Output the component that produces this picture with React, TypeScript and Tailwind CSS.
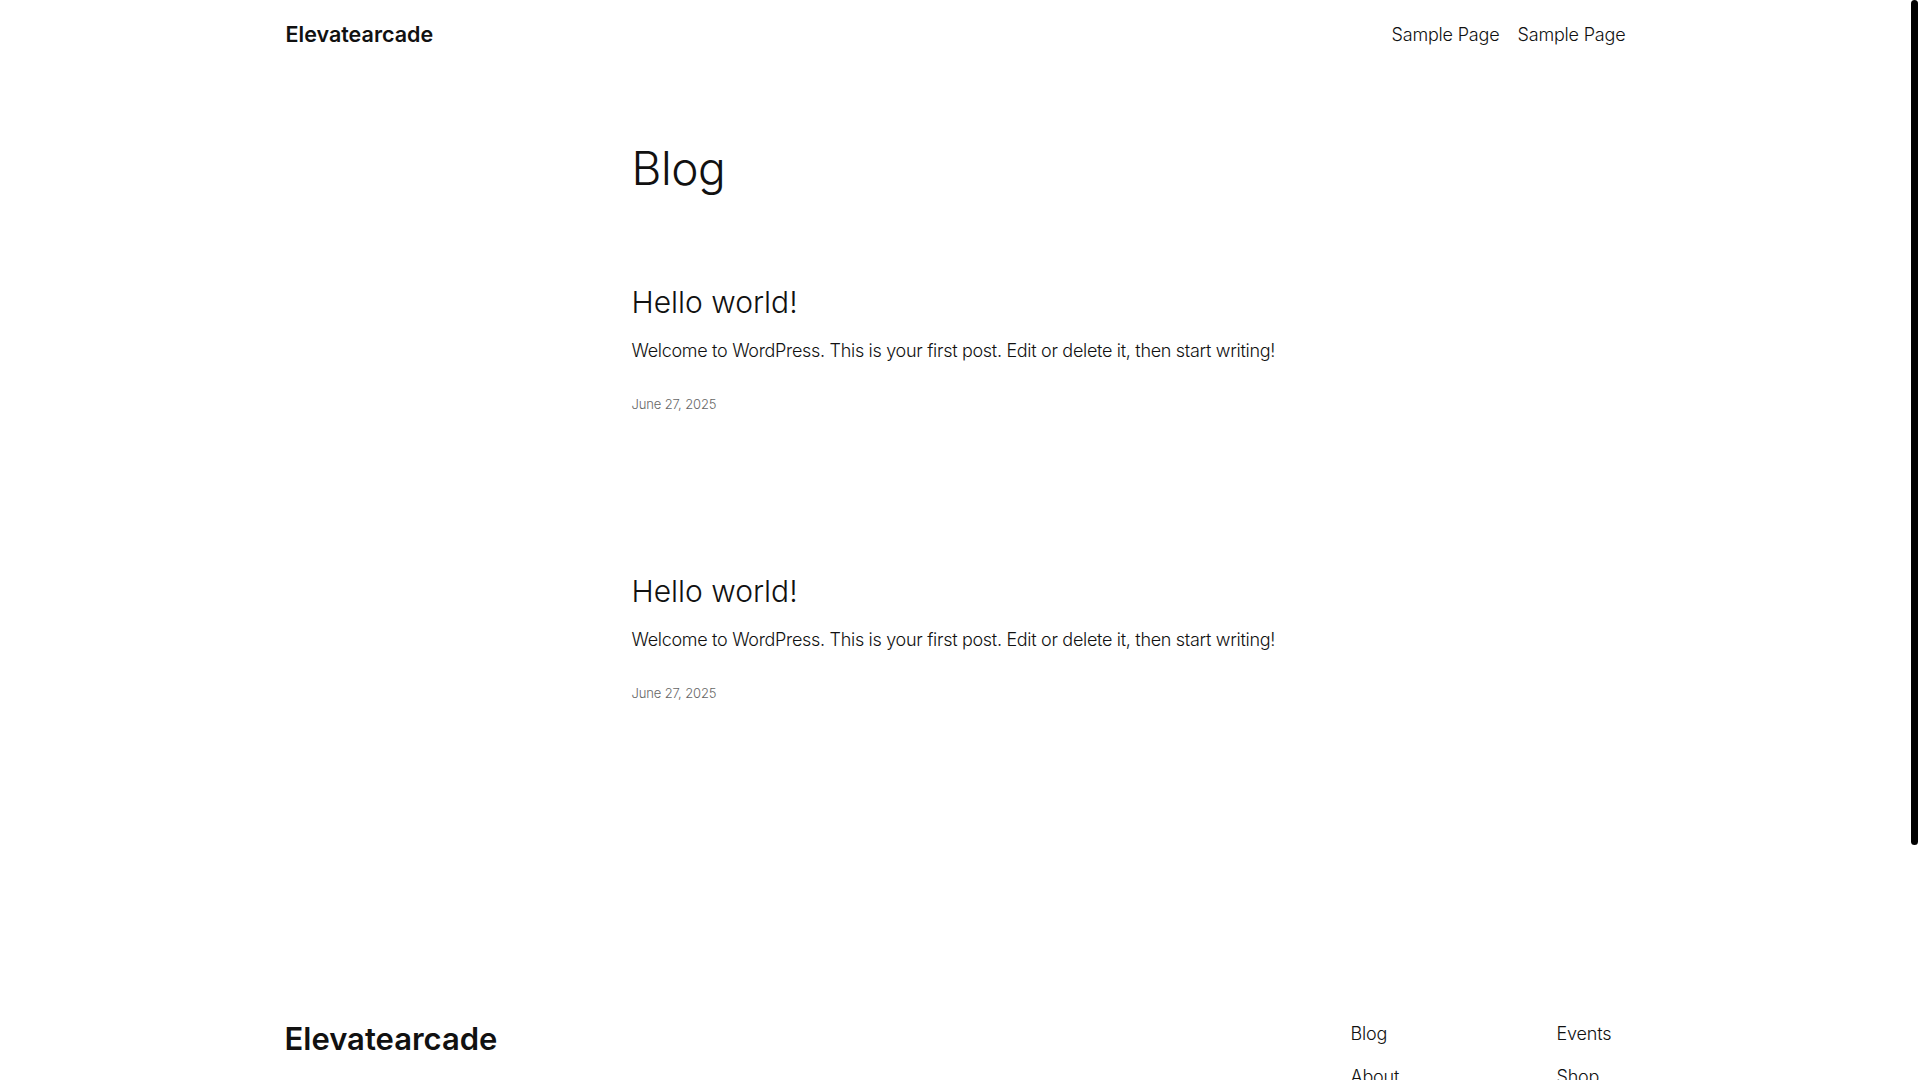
const posts = [
  {
    id: 1,
    title: "Hello world!",
    excerpt:
      "Welcome to WordPress. This is your first post. Edit or delete it, then start writing!",
    date: "June 27, 2025",
  },
  {
    id: 2,
    title: "Hello world!",
    excerpt:
      "Welcome to WordPress. This is your first post. Edit or delete it, then start writing!",
    date: "June 27, 2025",
  },
];

const footerCols = [
  { links: ["Blog", "About"], width: "w-[206px]" },
  { links: ["Events", "Shop"], width: "w-[64px]" },
];

const App = () => {
  return (
    <div className="bg-white text-[#111111] font-['Inter','Noto_Sans',sans-serif]">
      {/* page content sits left of the scrollbar gutter */}
      <div className="w-[1905px]">
        <header className="w-[1346px] mx-auto pl-[6px] h-[68px] flex items-center justify-between">
          <a className="text-[21.5px] font-semibold leading-none pt-[2px]">Elevatearcade</a>
          <nav className="flex gap-[18px] text-[18px] font-light tracking-[-0.01em]">
            <a>Sample Page</a>
            <a>Sample Page</a>
          </nav>
        </header>

        <main className="w-[642px] mx-auto pt-[73px] pb-[160px]">
          <h1 className="text-[46px] font-light leading-[1.2] tracking-[-0.01em]">
            Blog
          </h1>

          <div className="mt-[88px] flex flex-col gap-[159px]">
            {posts.map((post) => (
              <article key={post.id} className="flex flex-col">
                <h2 className="text-[30px] font-light leading-[1.2]">
                  {post.title}
                </h2>
                <p className="mt-[17px] text-[18px] font-light leading-[1.6] tracking-[-0.017em] whitespace-nowrap">
                  {post.excerpt}
                </p>
                <div className="mt-[29px] text-[13px] font-light leading-[1.5] tracking-[-0.01em] text-[#666666]">
                  {post.date}
                </div>
              </article>
            ))}
          </div>
        </main>

        <footer className="w-[1336px] mx-auto pt-[156px] pb-[120px]">
          <div className="flex justify-between items-start">
            <div className="text-[31px] font-semibold leading-[1.2]">
              Elevatearcade
            </div>
            <div className="flex">
              {footerCols.map((col, i) => (
                <ul key={i} className={`${col.width} flex flex-col gap-[14px]`}>
                  {col.links.map((l) => (
                    <li
                      key={l}
                      className="text-[18px] font-light leading-[1.6] tracking-[-0.01em]"
                    >
                      {l}
                    </li>
                  ))}
                </ul>
              ))}
            </div>
          </div>
          <div className="mt-[120px] text-[14px] font-light">
            Designed with WordPress
          </div>
        </footer>
      </div>

      {/* scrollbar thumb overlay */}
      <div
        aria-hidden="true"
        className="fixed top-0 right-[2px] w-[7px] h-[845px] rounded-full bg-black"
      />
    </div>
  );
};

export default App;
